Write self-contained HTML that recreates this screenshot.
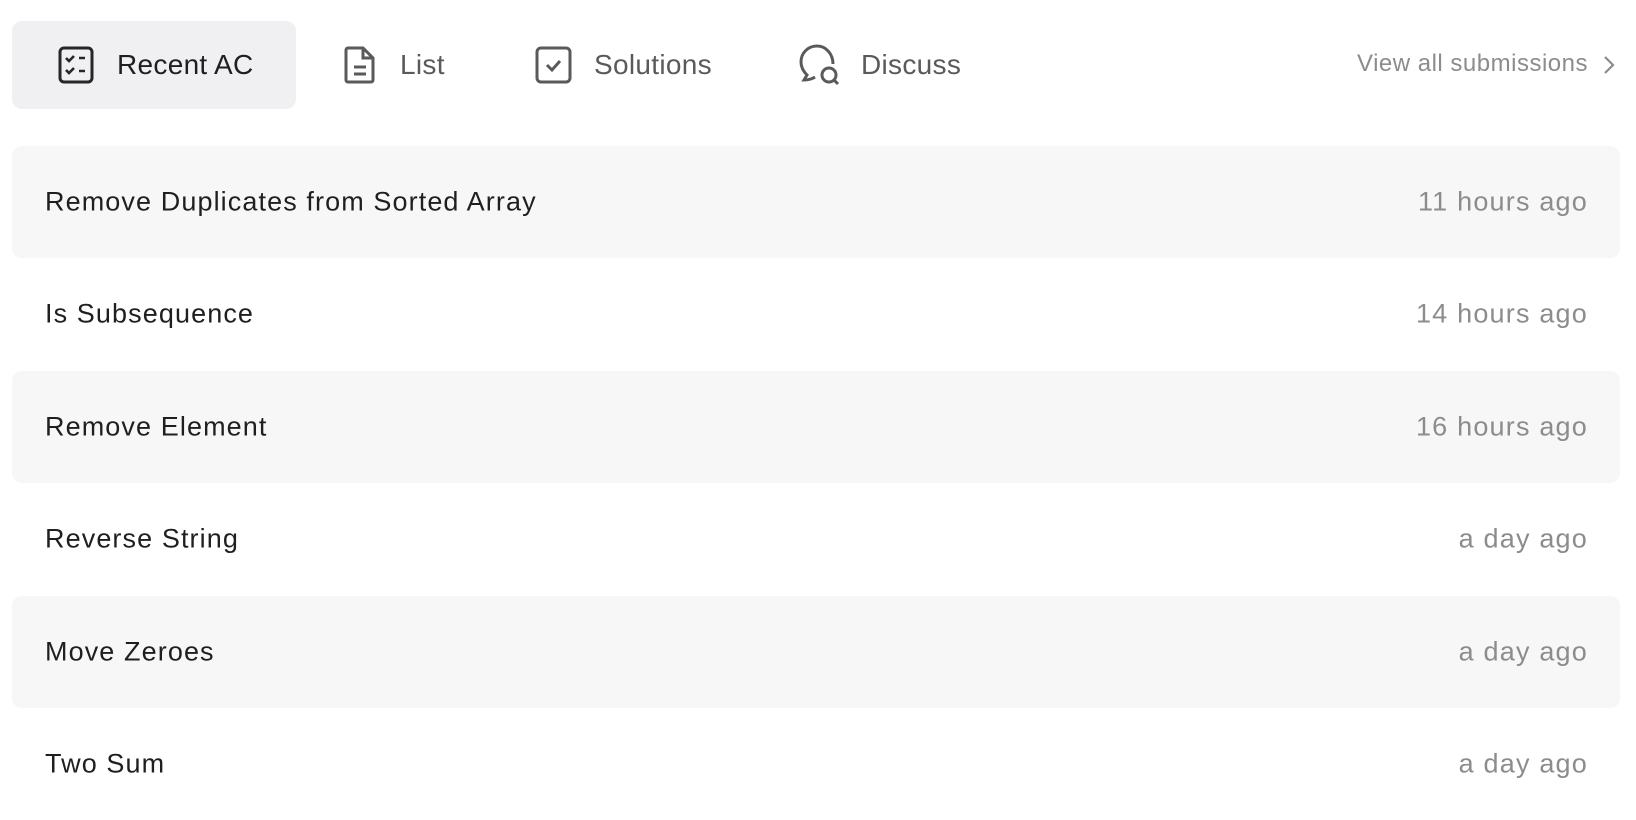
<!DOCTYPE html>
<html><head><style>
body{margin:0;width:1636px;height:812px;background:#fff;font-family:"Liberation Sans",sans-serif;overflow:hidden;position:relative}
.tab{position:absolute;top:21px;height:88px;display:flex;align-items:center;font-size:28px;color:#5a5a5a;letter-spacing:0.3px}
.tab svg{position:absolute}
.active{left:12px;width:284px;background:#f0f0f2;border-radius:10px;color:#1f1f1f}
.row{position:absolute;left:12px;width:1608px;height:112px;border-radius:10px;font-size:27px;color:#1f1f1f;letter-spacing:1.1px}
.row.g{background:#f7f7f7}
.row .t{position:absolute;left:33px;top:50%;transform:translateY(-50%)}
.row .d{position:absolute;right:32px;top:50%;transform:translateY(-50%);color:#8c8c8c;letter-spacing:1.2px}
.va{position:absolute;left:1357px;top:50px;font-size:24px;color:#8c8c8c;letter-spacing:0.5px}
</style></head><body>
<div class="tab active"><svg style="left:46px" width="36" height="38" viewBox="0 0 36 38" fill="none" stroke="#262626" stroke-width="3"><rect x="2" y="2" width="32" height="34" rx="4"/><path d="M8 12l3 3 5-5M8 24l3 3 5-5M21 12h6M21 25h6" stroke-width="2.6"/></svg><span style="position:absolute;left:105px">Recent AC</span></div>
<div class="tab" style="left:344px;width:120px"><svg width="32" height="38" viewBox="0 0 32 38" fill="none" stroke="#5a5a5a" stroke-width="3"><path d="M4 2h15l10 10v22a2 2 0 0 1-2 2H4a2 2 0 0 1-2-2V4a2 2 0 0 1 2-2zM19 2v10h10M10 21h12M10 28h12"/></svg><span style="position:absolute;left:56px">List</span></div>
<div class="tab" style="left:535px;width:200px"><svg width="37" height="38" viewBox="0 0 37 38" fill="none" stroke="#5a5a5a" stroke-width="3"><rect x="2" y="2" width="33" height="34" rx="4"/><path d="M12 19l5 5 8-9"/></svg><span style="position:absolute;left:59px">Solutions</span></div>
<div class="tab" style="left:799px;width:200px"><svg width="44" height="42" viewBox="0 0 44 42" fill="none" stroke="#5a5a5a" stroke-width="3"><path d="M18 2C9 2 2 9 2 18c0 6 3 10 6 13l-3 5c4 0 8-1 11-3M34 20c0-10-7-18-16-18"/><circle cx="30" cy="31" r="7"/><path d="M35 36l4 4"/></svg><span style="position:absolute;left:62px">Discuss</span></div>
<div class="va">View all submissions</div>
<svg style="position:absolute;left:1603px;top:55px" width="12" height="20" viewBox="0 0 12 20" fill="none" stroke="#8c8c8c" stroke-width="2.2"><path d="M2 2l8 8-8 8"/></svg>
<div class="row g" style="top:146px"><span class="t">Remove Duplicates from Sorted Array</span><span class="d">11 hours ago</span></div>
<div class="row" style="top:258px"><span class="t">Is Subsequence</span><span class="d">14 hours ago</span></div>
<div class="row g" style="top:371px"><span class="t">Remove Element</span><span class="d">16 hours ago</span></div>
<div class="row" style="top:483px"><span class="t">Reverse String</span><span class="d">a day ago</span></div>
<div class="row g" style="top:596px"><span class="t">Move Zeroes</span><span class="d">a day ago</span></div>
<div class="row" style="top:708px"><span class="t">Two Sum</span><span class="d">a day ago</span></div>
</body></html>
